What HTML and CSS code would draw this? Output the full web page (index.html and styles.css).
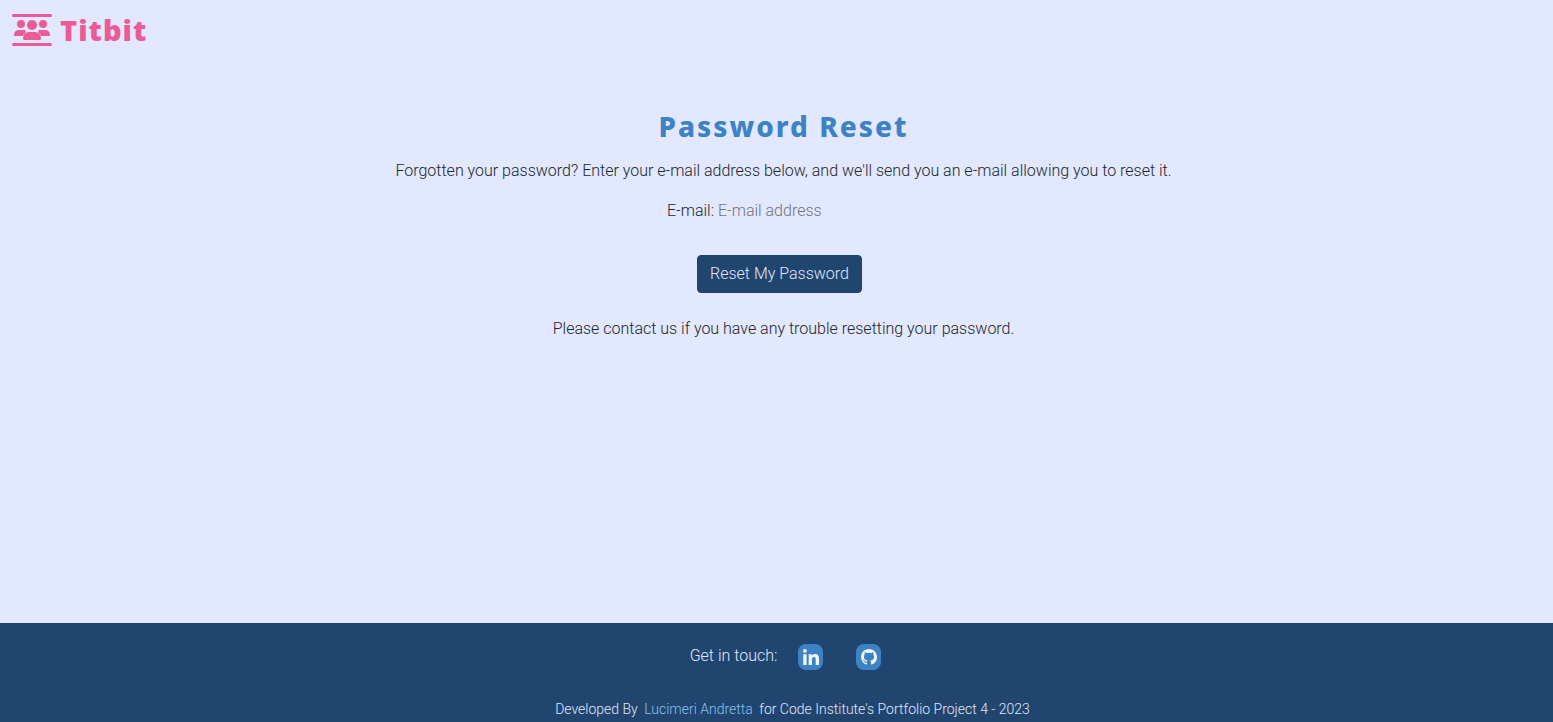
FILE: index.html
```html
<!DOCTYPE html>
<html lang="en">
<head>
  <meta charset="utf-8">
  <title>Titbit - Password Reset</title>
  <link rel="stylesheet" href="styles.css">
</head>
<body>
  <header class="site-header">
    <a class="brand" href="#">
      <svg class="brand-icon" viewBox="0 0 40 32" fill="currentColor" aria-hidden="true">
        <rect x="0" y="0" width="40" height="3" rx="1.5"/>
        <rect x="0" y="29" width="40" height="3" rx="1.5"/>
        <circle cx="9" cy="10" r="4"/>
        <circle cx="31" cy="10" r="4"/>
        <circle cx="20" cy="11" r="5"/>
        <path d="M6.500 16h5c.7 0 1.400.2 2 .4-.2 2.200.6 4.200 2 5.600H3c-.6 0-1-.4-1-1 0-2.800 2-5 4.500-5z"/>
        <path d="M33.500 16h-5c-.7 0-1.400.2-2 .4.200 2.200-.6 4.200-2 5.600H37c.6 0 1-.4 1-1 0-2.800-2-5-4.500-5z"/>
        <path stroke="#e1e8ff" stroke-width="1" paint-order="stroke" d="M17 18h6c3.500 0 6 3 6 6.600 0 .8-.6 1.400-1.400 1.400H12.400c-.8 0-1.400-.6-1.400-1.400C11 21 13.500 18 17 18z"/>
      </svg>
      <span class="brand-name">Titbit</span>
    </a>
  </header>

  <main class="content">
    <h1 class="title">Password Reset</h1>
    <p class="text">Forgotten your password? Enter your e-mail address below, and we'll send you an e-mail allowing you to reset it.</p>
    <form class="reset-form">
      <div class="field">
        <label for="email">E-mail:</label>
        <input class="email" id="email" type="email" placeholder="E-mail address">
      </div>
      <button class="submit" type="submit">Reset My Password</button>
    </form>
    <p class="text">Please contact us if you have any trouble resetting your password.</p>
  </main>

  <footer class="site-footer">
    <div class="contact">
      <span class="contact-label">Get in touch:</span>
      <a class="social" href="#" aria-label="LinkedIn">
        <svg class="social-icon" viewBox="0 0 448 448" fill="currentColor" aria-hidden="true"><path d="M100.280 448H7.400V148.900h92.880zM53.790 108.100C24.090 108.100 0 83.500 0 53.800a53.790 53.790 0 0 1 107.580 0c0 29.700-24.100 54.300-53.790 54.300zM447.900 448h-92.680V302.400c0-34.700-.7-79.200-48.290-79.200-48.290 0-55.690 37.700-55.690 76.700V448h-92.780V148.900h89.080v40.800h1.300c12.400-23.500 42.690-48.300 87.880-48.300 94 0 111.280 61.900 111.280 142.300V448z"/></svg>
      </a>
      <a class="social" href="#" aria-label="GitHub">
        <svg class="social-icon" viewBox="0 0 16 16" fill="currentColor" aria-hidden="true"><path d="M8 0C3.580 0 0 3.580 0 8c0 3.540 2.290 6.530 5.470 7.590.4.070.55-.17.55-.38 0-.19-.01-.82-.01-1.490-2.010.37-2.530-.49-2.690-.94-.09-.23-.48-.94-.82-1.130-.28-.15-.68-.52-.01-.53.63-.01 1.080.58 1.230.82.72 1.210 1.870.87 2.330.66.07-.52.28-.87.51-1.070-1.780-.2-3.640-.89-3.640-3.950 0-.87.31-1.590.82-2.150-.08-.2-.36-1.020.08-2.120 0 0 .67-.21 2.200.82.64-.18 1.320-.27 2-.27s1.360.09 2 .27c1.530-1.040 2.200-.82 2.200-.82.44 1.100.16 1.920.08 2.120.51.56.82 1.270.82 2.150 0 3.070-1.870 3.750-3.650 3.950.29.25.54.73.54 1.480 0 1.070-.01 1.930-.01 2.200 0 .21.15.46.55.38A8.010 8.010 0 0 0 16 8c0-4.420-3.580-8-8-8z"/></svg>
      </a>
    </div>
    <p class="credit">Developed By <a class="author" href="#">Lucimeri Andretta</a> for Code Institute's Portfolio Project 4 - 2023</p>
  </footer>
</body>
</html>
```
FILE: styles.css
```css
* {
  box-sizing: border-box;
}

body {
  margin: 0;
  min-height: 100vh;
  display: flex;
  flex-direction: column;
  background: #e1e8ff;
  color: #212529;
  font: 300 16px/24px Roboto, sans-serif;
}

.site-header {
  padding: 12px;
}

.brand {
  display: inline-flex;
  align-items: center;
  gap: 8px;
  color: #eb5b95;
  text-decoration: none;
}

.brand-icon {
  width: 40px;
  height: 32px;
}

.brand-name {
  font: 900 29px/36px "Noto Sans", sans-serif;
  letter-spacing: 1px;
}

.content {
  flex: 1;
  display: flex;
  flex-direction: column;
  align-items: center;
  padding: 43px 0 48px 14px;
}

.title {
  margin: 0 0 15px;
  color: #3d82c4;
  font: 800 28px/36px "Noto Sans", sans-serif;
  letter-spacing: 2px;
}

.text {
  margin: 0;
}

.reset-form {
  display: flex;
  flex-direction: column;
  align-items: center;
  gap: 32px;
  margin: 16px 0 24px;
}

.field {
  display: flex;
  gap: 4px;
}

.email {
  width: 182px;
  padding: 0;
  border: 0;
  background: transparent;
  color: inherit;
  font: inherit;
}

.email::placeholder {
  color: #757575;
}

.submit {
  margin-right: 8px;
  padding: 6px 12px;
  border: 1px solid #20456e;
  border-radius: 4px;
  background: #20456e;
  color: #e1e8ff;
  font: inherit;
}

.site-footer {
  display: flex;
  flex-direction: column;
  align-items: center;
  gap: 27px;
  padding: 21px 0 1px 18px;
  background: #20456e;
  color: #e1e8ff;
}

.contact {
  display: flex;
  align-items: flex-start;
}

.contact-label {
  margin-right: 21px;
}

.social {
  display: grid;
  place-items: center;
  width: 25px;
  height: 26px;
  border-radius: 8px;
  background: #3d82c4;
  color: #f5f5f5;
}

.social + .social {
  margin-left: 33px;
}

.social-icon {
  width: 16px;
  height: 16px;
}

.credit {
  margin: 0;
  padding-left: 14px;
  font-size: 14px;
}

.author {
  margin: 0 3px;
  color: #89c2f0;
  text-decoration: none;
}
```
